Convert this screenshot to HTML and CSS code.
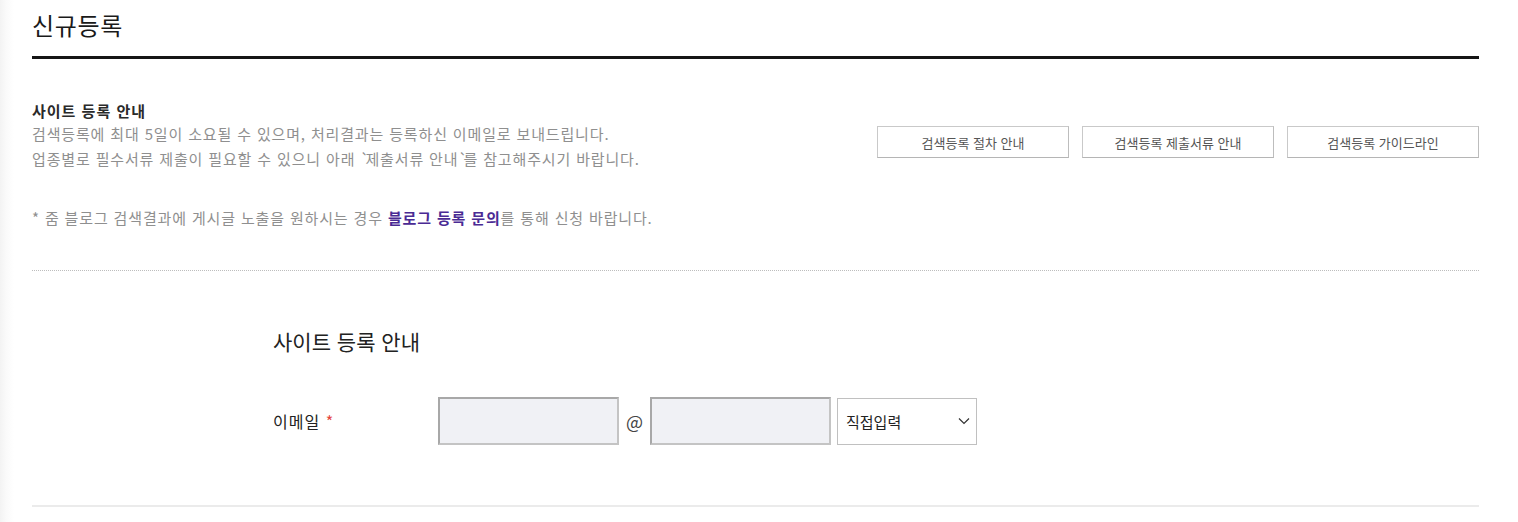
FILE: index.html
```html
<!DOCTYPE html>
<html lang="ko">
<head>
<meta charset="utf-8">
<title>신규등록</title>
<link rel="stylesheet" href="styles.css">
</head>
<body>
<div class="page">
  <h1 class="title">신규등록</h1>
  <div class="info">
    <div class="info-text">
      <h2 class="info-head">사이트 등록 안내</h2>
      <p class="info-desc">검색등록에 최대 5일이 소요될 수 있으며, 처리결과는 등록하신 이메일로 보내드립니다.<br>업종별로 필수서류 제출이 필요할 수 있으니 아래 <span class="tick">`</span>제출서류 안내<span class="tick">`</span>를 참고해주시기 바랍니다.</p>
    </div>
    <div class="info-btns">
      <button class="btn" type="button">검색등록 절차 안내</button>
      <button class="btn" type="button">검색등록 제출서류 안내</button>
      <button class="btn" type="button">검색등록 가이드라인</button>
    </div>
  </div>
  <p class="note">* 줌 블로그 검색결과에 게시글 노출을 원하시는 경우 <a class="note-link" href="#">블로그 등록 문의</a>를 통해 신청 바랍니다.</p>
  <div class="form">
    <h3 class="form-title">사이트 등록 안내</h3>
    <div class="row">
      <label class="label">이메일 <span class="req">*</span></label>
      <div class="fields">
        <input class="inp" type="text">
        <span class="at">@</span>
        <input class="inp" type="text">
        <div class="select">
          <span>직접입력</span>
          <svg class="chev" width="12" height="8" viewBox="0 0 12 8"><path d="M1 1.5 L6 6.5 L11 1.5" fill="none" stroke="#333" stroke-width="1.2"/></svg>
        </div>
      </div>
    </div>
  </div>
</div>
</body>
</html>
```
FILE: styles.css
```css
* { box-sizing: border-box; }
html, body { margin: 0; padding: 0; }
body {
  font-family: "Noto Sans CJK KR", "Noto Sans", sans-serif;
  background: linear-gradient(to right, #f3f3f3 0, #fafafa 6px, #fff 14px);
  color: #222;
  height: 522px;
}
.page {
  width: 1447px;
  margin-left: 32px;
  padding-top: 10px;
}
.title {
  margin: 0;
  font-size: 24px;
  font-weight: 400;
  line-height: 30px;
  color: #1a1a1a;
  padding-bottom: 16px;
  border-bottom: 3px solid #151515;
  letter-spacing: 0.7px;
}
.info {
  display: flex;
  justify-content: space-between;
  margin-top: 42px;
}
.info-head {
  margin: 0;
  font-size: 15px;
  font-weight: 700;
  line-height: 20px;
  color: #2a2a2a;
  letter-spacing: 1px;
}
.info-desc {
  margin: 0;
  font-size: 15px;
  line-height: 25px;
  color: #8f8f8f;
  letter-spacing: 0.85px;
}
.tick {
  letter-spacing: -4px;
}
.info-btns {
  display: flex;
  gap: 13px;
  margin-top: 25px;
  align-self: flex-start;
}
.btn {
  width: 192px;
  height: 32px;
  background: #fff;
  border: 1px solid #c9c9c9;
  border-bottom-color: #b5b5b5;
  border-right-color: #bdbdbd;
  font-family: inherit;
  font-size: 13px;
  color: #555;
  padding: 0;
}
.note {
  margin: 34px 0 0;
  font-size: 15px;
  line-height: 25px;
  color: #8f8f8f;
  letter-spacing: 0.85px;
  padding-bottom: 40px;
  border-bottom: 1px dotted #bdbdbd;
}
.note-link {
  color: #4a2a94;
  font-weight: 700;
  text-decoration: none;
}
.form {
  padding: 56px 0 60px 241px;
  border-bottom: 2px solid #ebebeb;
}
.form-title {
  margin: 0;
  font-size: 21px;
  font-weight: 400;
  line-height: 28px;
  color: #222;
}
.row {
  display: flex;
  align-items: center;
  margin-top: 42px;
}
.label {
  width: 165px;
  font-size: 16px;
  letter-spacing: 1px;
  color: #222;
}
.req { color: #e5473c; }
.fields {
  display: flex;
  align-items: center;
}
.inp {
  width: 181px;
  height: 48px;
  background: #f0f1f5;
  border: 2px solid #a8a8a8;
  border-right-color: #c4c4c4;
  border-bottom-color: #c4c4c4;
  margin: 0;
}
.at {
  width: 31px;
  text-align: center;
  font-size: 18px;
  color: #444;
}
.select {
  margin-left: 6px;
  width: 140px;
  height: 47px;
  border: 1px solid #c0c0c0;
  background: #fff;
  display: flex;
  align-items: center;
  justify-content: space-between;
  padding: 0 6px 0 8px;
  font-size: 15px;
  color: #222;
}
.chev { display: block; }
```
